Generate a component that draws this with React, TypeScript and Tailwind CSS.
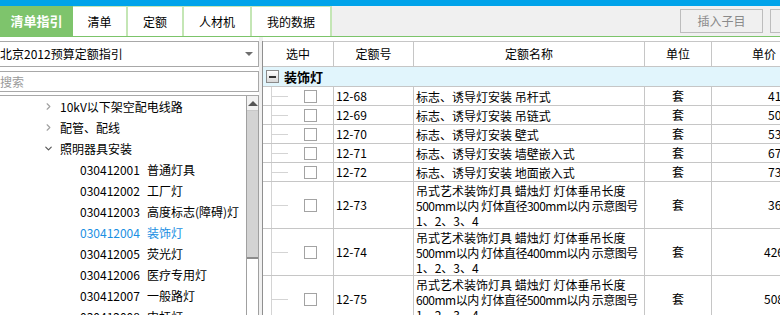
import React from "react";
import { ChevronRight, ChevronDown } from "lucide-react";

// top tab bar
const tabs = [
  { label: "清单", w: "w-[55px]" },
  { label: "定额", w: "w-[56px]" },
  { label: "人材机", w: "w-[68px]" },
  { label: "我的数据", w: "w-[80px]" },
];

const treeItems = [
  { code: "030412001", name: "普通灯具" },
  { code: "030412002", name: "工厂灯" },
  { code: "030412003", name: "高度标志(障碍)灯" },
  { code: "030412004", name: "装饰灯", active: true },
  { code: "030412005", name: "荧光灯" },
  { code: "030412006", name: "医疗专用灯" },
  { code: "030412007", name: "一般路灯" },
  { code: "030412008", name: "中杆灯" },
];

const rows = [
  { code: "12-68", name: ["标志、诱导灯安装 吊杆式"], price: "41.36", pl: "pl-[56px]", h: "h-[19px]" },
  { code: "12-69", name: ["标志、诱导灯安装 吊链式"], price: "50.82", pl: "pl-[56px]", h: "h-[19px]" },
  { code: "12-70", name: ["标志、诱导灯安装 壁式"], price: "53.17", pl: "pl-[56px]", h: "h-[19px]" },
  { code: "12-71", name: ["标志、诱导灯安装 墙壁嵌入式"], price: "67.45", pl: "pl-[56px]", h: "h-[19px]" },
  { code: "12-72", name: ["标志、诱导灯安装 地面嵌入式"], price: "73.09", pl: "pl-[56px]", h: "h-[19px]" },
  {
    code: "12-73",
    name: ["吊式艺术装饰灯具 蜡烛灯 灯体垂吊长度", "500mm以内 灯体直径300mm以内 示意图号", "1、2、3、4"],
    price: "36.58",
    pl: "pl-[56px]",
    h: "h-[47px]",
  },
  {
    code: "12-74",
    name: ["吊式艺术装饰灯具 蜡烛灯 灯体垂吊长度", "500mm以内 灯体直径400mm以内 示意图号", "1、2、3、4"],
    price: "426.71",
    pl: "pl-[52px]",
    h: "h-[47px]",
  },
  {
    code: "12-75",
    name: ["吊式艺术装饰灯具 蜡烛灯 灯体垂吊长度", "600mm以内 灯体直径500mm以内 示意图号", "1、2、3、4"],
    price: "508.33",
    pl: "pl-[52px]",
    h: "h-[47px]",
  },
];

const TreeLink = () => (
  <div className="flex h-full w-[71px] shrink-0 items-center border-r border-[#c6c6c6]">
    <div className="ml-[8px] flex h-full w-[17px] items-center border-l border-[#d4d4d4]">
      <div className="h-px w-full bg-[#d4d4d4]" />
    </div>
    <div className="ml-[16px] h-[13px] w-[13px] border border-[#a3a3a3] bg-white" />
  </div>
);

export default function App() {
  return (
    <div className="h-[315px] w-[780px] overflow-hidden bg-white text-[12px] text-black font-['Noto_Sans_CJK_SC','Liberation_Sans',sans-serif]">
      <div className="h-[6px] bg-[#00a3ea]" />

      {/* tabs */}
      <div className="flex h-[31px] items-stretch overflow-hidden border-b border-[#7cc46a] bg-[#f0f0f0]">
        <div className="flex w-[73px] shrink-0 items-center justify-center bg-[#7ec46c] text-[13px] font-bold text-white">
          清单指引
        </div>
        {tabs.map((t) => (
          <div
            key={t.label}
            className={`${t.w} flex shrink-0 items-center justify-center border-r-2 border-t border-[#c4e6b5] bg-white text-[12px]`}
          >
            {t.label}
          </div>
        ))}
        <div className="w-[348px] shrink-0" />
        <div className="flex shrink-0 items-center gap-[7px] pb-[1px]">
          <div className="flex h-[24px] w-[83px] items-center justify-center border border-[#bdbdbd] bg-[#f0f0f0] text-[#8a8a8a]">
            插入子目
          </div>
          <div className="flex h-[24px] w-[83px] items-center justify-center border border-[#bdbdbd] bg-[#f0f0f0] text-[#8a8a8a]">
            插入清单
          </div>
        </div>
      </div>

      <div className="flex h-[278px]">
        {/* left guide panel */}
        <div className="flex w-[259px] shrink-0 flex-col pt-[4px]">
          <div className="flex h-[26px] shrink-0 items-center justify-between border-y border-r border-[#a8a8a8] pr-[5px]">
            <span>北京2012预算定额指引</span>
            <span className="h-0 w-0 border-x-[4px] border-t-[4px] border-x-transparent border-t-[#6e6e6e]" />
          </div>
          <div className="mt-[4px] flex h-[21px] shrink-0 items-center border-y border-r border-[#a8a8a8] text-[#9a9a9a]">
            搜索
          </div>
          <div className="mt-[3px] flex min-h-0 flex-1 overflow-hidden border-t border-[#a8a8a8]">
            <div className="flex-1">
              <div className="flex h-[21px] items-center pl-[43px]">
                <ChevronRight size={11} strokeWidth={2.5} className="text-[#a0a0a0]" />
                <span className="ml-[6px]">10kV以下架空配电线路</span>
              </div>
              <div className="flex h-[21px] items-center pl-[43px]">
                <ChevronRight size={11} strokeWidth={2.5} className="text-[#a0a0a0]" />
                <span className="ml-[6px]">配管、配线</span>
              </div>
              <div className="flex h-[21px] items-center pl-[43px]">
                <ChevronDown size={11} strokeWidth={2.5} className="text-[#555]" />
                <span className="ml-[6px]">照明器具安装</span>
              </div>
              {treeItems.map((it) => (
                <div
                  key={it.code}
                  className={`flex h-[21px] items-center pl-[80px] ${it.active ? "text-[#1a8fe3]" : ""}`}
                >
                  <span className="w-[67px]">{it.code}</span>
                  <span>{it.name}</span>
                </div>
              ))}
            </div>
            {/* scrollbar */}
            <div className="flex w-[13px] shrink-0 flex-col border-x border-[#a0a0a0] bg-white">
              <div className="flex h-[15px] shrink-0 items-center justify-center border-b border-[#c8c8c8] bg-[#f2f2f2]">
                <span className="h-0 w-0 border-x-[5px] border-b-[5px] border-x-transparent border-b-[#555]" />
              </div>
              <div className="h-[148px] shrink-0 border-b-2 border-[#8c8c8c] bg-[#d3d3d3]" />
              <div className="flex-1 bg-white" />
            </div>
          </div>
        </div>

        {/* splitter */}
        <div className="flex w-[4px] shrink-0 justify-between bg-[#f0f0f0] pt-[4px]">
          <div />
          <div className="w-px bg-[#8f8f8f]" />
        </div>

        {/* quota table */}
        <div className="flex min-w-0 flex-1 flex-col pt-[4px]">
          <div className="flex h-[26px] shrink-0 border-y border-[#c6c6c6] bg-white">
            <div className="flex w-[71px] shrink-0 items-center justify-center border-r border-[#c6c6c6]">选中</div>
            <div className="flex w-[80px] shrink-0 items-center justify-center border-r border-[#c6c6c6]">定额号</div>
            <div className="flex w-[231px] shrink-0 items-center justify-center border-r border-[#c6c6c6]">定额名称</div>
            <div className="flex w-[67px] shrink-0 items-center justify-center border-r border-[#c6c6c6]">单位</div>
            <div className="flex w-[90px] shrink-0 items-center justify-center pl-[14px]">单价</div>
          </div>

          <div className="flex h-[19px] shrink-0 items-center bg-[#e1f5fc]">
            <div className="ml-[3px] flex h-[13px] w-[13px] items-center justify-center border border-[#8a8a8a] bg-gradient-to-b from-white to-[#d8d8d8]">
              <div className="h-[2px] w-[7px] bg-[#333]" />
            </div>
            <span className="ml-[5px] text-[13px] font-bold">装饰灯</span>
          </div>

          {rows.map((r) => (
            <div key={r.code} className={`${r.h} flex shrink-0 items-stretch border-t border-[#c6c6c6]`}>
              <TreeLink />
              <div className="flex w-[80px] shrink-0 items-center border-r border-[#c6c6c6] pl-[2px]">
                {r.code}
              </div>
              <div className="flex w-[231px] shrink-0 flex-col justify-center overflow-hidden border-r border-[#c6c6c6] pl-[2px] leading-[15px]">
                {r.name.map((l, i) => (
                  <span key={i} className={`whitespace-nowrap ${i === 1 ? "tracking-[-0.5px]" : ""}`}>
                    {l}
                  </span>
                ))}
              </div>
              <div className="flex w-[67px] shrink-0 items-center justify-center border-r border-[#c6c6c6]">套</div>
              <div className={`${r.pl} flex w-[90px] shrink-0 items-center`}>{r.price}</div>
            </div>
          ))}
        </div>
      </div>
    </div>
  );
}
